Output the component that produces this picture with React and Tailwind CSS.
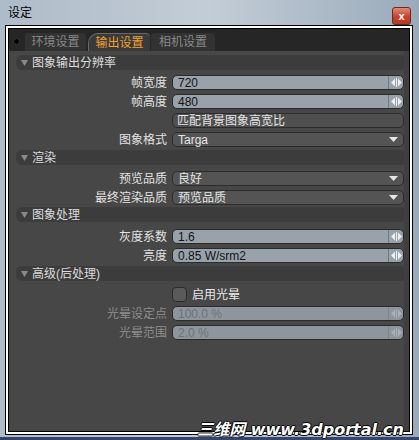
import React from 'react';

const FONT = { fontFamily: '"Liberation Sans", "Noto Sans CJK SC", sans-serif' };

const Spinner = ({ dim }) => (
  <div className={`flex items-center justify-center w-[15px] h-full border-l ${dim ? 'border-[#7c838a]' : 'border-[#737a82]'}`}>
    <svg width="11" height="9" viewBox="0 0 11 9">
      <polygon points="4,0.5 4,8.5 0,4.5" fill={dim ? '#aab0b6' : '#eef0f2'} />
      <polygon points="7,0.5 7,8.5 11,4.5" fill={dim ? '#aab0b6' : '#eef0f2'} />
      <rect x="5" y="0" width="1" height="9" fill={dim ? '#aab0b6' : '#eef0f2'} />
    </svg>
  </div>
);

const Caret = () => (
  <svg width="9" height="5" viewBox="0 0 9 5" className="mr-[5px]">
    <polygon points="0,0 9,0 4.5,5" fill="#e6e6e6" />
  </svg>
);

const Row = ({ label, dim, children }) => (
  <div className="flex items-center h-[15px]">
    <div className={`w-[163px] pr-[5px] text-right text-[12px] leading-none whitespace-nowrap ${dim ? 'text-[#8c8c8c]' : 'text-[#e2e2e2]'}`}>
      {label}
    </div>
    <div className="flex-1 h-full">{children}</div>
  </div>
);

const NumField = ({ value, dim }) => (
  <div className={`flex items-center h-full rounded-[5px] border border-[#2a2a2a] ${dim ? 'bg-[#8e959c]' : 'bg-[#99a1aa]'}`}>
    <span className={`flex-1 pl-[5px] text-[12px] leading-none ${dim ? 'text-[#6c7278]' : 'text-[#141414]'}`}>{value}</span>
    <Spinner dim={dim} />
  </div>
);

const Dropdown = ({ value }) => (
  <div className="flex items-center h-full rounded-[5px] border border-[#2c2c2c] bg-[#545454]">
    <span className="flex-1 pl-[5px] text-[12px] leading-none text-[#e4e4e4]">{value}</span>
    <Caret />
  </div>
);

const Header = ({ title, className = '' }) => (
  <div className={`flex items-center h-[15px] ml-[7px] rounded-l-[6px] rounded-r-[3px] bg-[#3c3c3c] ${className}`}>
    <svg width="7" height="6" viewBox="0 0 7 6" className="ml-[5px] mr-[4px]">
      <polygon points="0,0 7,0 3.5,6" fill="#8a8a8a" />
    </svg>
    <span className="text-[12px] leading-none text-[#dcdcdc]">{title}</span>
  </div>
);

export default function App() {
  return (
    <div className="relative w-[419px] h-[440px] overflow-hidden bg-[#34456b]" style={FONT}>
      <div className="h-[437px] bg-gradient-to-r from-[#aebbc8] via-[#c3cdd7] to-[#9aaaba] flex flex-col">
        {/* title bar */}
        <div className="relative h-[25px] flex items-center pl-[8px]">
          <span className="text-[12px] text-black leading-none">设定</span>
          <div className="absolute right-[8px] top-[7px] w-[19px] h-[18px] rounded-[3px] border border-[#6b2a20] bg-gradient-to-b from-[#e08a74] via-[#c8452e] to-[#b23a22] flex items-center justify-center">
            <span className="text-white text-[11px] font-bold leading-none">x</span>
          </div>
        </div>

        {/* client area */}
        <div className="ml-[5px] mr-[6px] h-[410px] border border-black">
          <div className="h-full border-2 border-white">
            <div className="h-full border border-black flex flex-col bg-[#474747]">
              {/* tab bar */}
              <div className="h-[22px] bg-[#262626] flex items-end pl-[4px]">
                <div className="self-center w-[7px] h-[7px] rounded-full bg-black border border-[#3a3a3a] mr-[5px] mt-[2px]" />
                <div className="h-[18px] w-[61px] bg-[#323232] rounded-t-[4px] flex items-center justify-center text-[12px] text-[#888888] leading-none">
                  环境设置
                </div>
                <div className="h-[18px] w-[62px] ml-[2px] bg-[#3a3a3a] rounded-tl-[10px] rounded-tr-[4px] border-l border-t border-[#6a6a6a] flex items-center justify-center text-[12px] text-[#f0a030] leading-none">
                  输出设置
                </div>
                <div className="h-[18px] w-[64px] ml-[1px] bg-[#323232] rounded-t-[4px] flex items-center justify-center text-[12px] text-[#888888] leading-none">
                  相机设置
                </div>
              </div>

              {/* panel */}
              <div className="flex-1 flex">
                <div className="flex-1 pt-[4px]">
                  <Header title="图象输出分辨率" />
                  <div className="mt-[5px] flex flex-col gap-[4px]">
                    <Row label="帧宽度"><NumField value="720" /></Row>
                    <Row label="帧高度"><NumField value="480" /></Row>
                    <Row label="">
                      <div className="flex items-center h-full rounded-[5px] border border-[#2c2c2c] bg-[#4f4f4f] pl-[4px] text-[12px] leading-none text-[#e4e4e4]">
                        匹配背景图象高宽比
                      </div>
                    </Row>
                    <Row label="图象格式"><Dropdown value="Targa" /></Row>
                  </div>

                  <Header title="渲染" className="mt-[3px]" />
                  <div className="mt-[6px] flex flex-col gap-[4px]">
                    <Row label="预览品质"><Dropdown value="良好" /></Row>
                    <Row label="最终渲染品质"><Dropdown value="预览品质" /></Row>
                  </div>

                  <Header title="图象处理" className="mt-[2px]" />
                  <div className="mt-[7px] flex flex-col gap-[4px]">
                    <Row label="灰度系数"><NumField value="1.6" /></Row>
                    <Row label="亮度"><NumField value="0.85 W/srm2" /></Row>
                  </div>

                  <Header title="高级(后处理)" className="mt-[3px]" />
                  <div className="mt-[6px] flex flex-col gap-[4px]">
                    <Row label="">
                      <div className="flex items-center h-full">
                        <div className="w-[15px] h-[15px] rounded-[4px] border border-[#2a2a2a] bg-[#5a5a5a]" />
                        <span className="ml-[5px] text-[12px] leading-none text-[#e8e8e8]">启用光晕</span>
                      </div>
                    </Row>
                    <Row label="光晕设定点" dim><NumField value="100.0 %" dim /></Row>
                    <Row label="光晕范围" dim><NumField value="2.0 %" dim /></Row>
                  </div>
                </div>
                <div className="w-[5px] bg-[#3f3f3f]" />
              </div>
            </div>
          </div>
        </div>
      </div>

      {/* watermark */}
      <div
        className="absolute right-[15px] bottom-[2px] text-[16px] font-bold italic text-white leading-none whitespace-nowrap"
        style={{ fontFamily: '"DejaVu Sans", "Noto Sans CJK SC", sans-serif', textShadow: '1px 0 #000, -1px 0 #000, 0 1px #000, 0 -1px #000' }}
      >
        三维网 www.3dportal.cn
      </div>
    </div>
  );
}
